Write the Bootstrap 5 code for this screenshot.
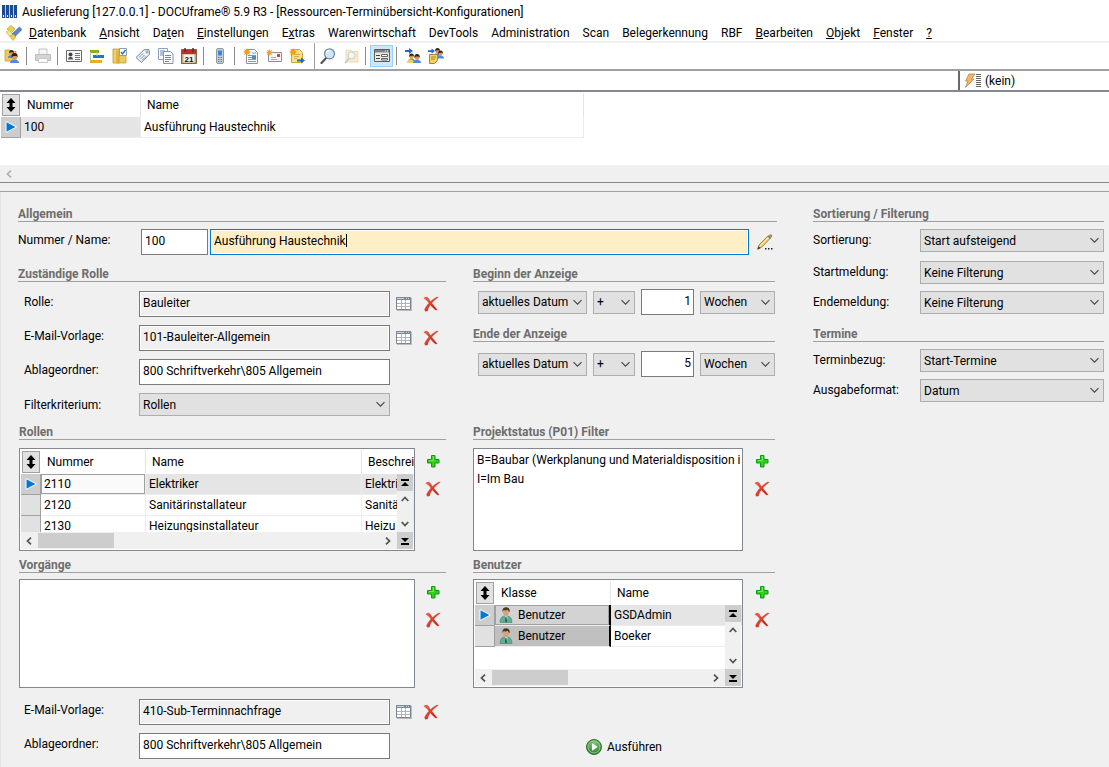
<!DOCTYPE html>
<html lang="de">
<head>
<meta charset="utf-8">
<meta name="viewport" content="width=device-width, initial-scale=1">
<title>DOCUframe – Ressourcen-Terminübersicht-Konfigurationen</title>
<link rel="stylesheet" href="https://cdn.jsdelivr.net/npm/bootstrap@5.3.0/dist/css/bootstrap.min.css">
<script src="https://cdn.jsdelivr.net/npm/bootstrap@5.3.0/dist/js/bootstrap.bundle.min.js"></script>
<style>
  body { font-family: Roboto, "Open Sans", sans-serif; font-size: 12px; line-height: 16px; color: #000; background: #f0f0f0; min-height: 100vh; }
  svg { display: block; flex: none; }
  a { color: inherit; text-decoration: none; }

  .title-row { height: 24px; padding: 0 2px; gap: 4px; }
  .menu-row { height: 17px; padding-left: 6px; gap: 13px; }
  .menu-row svg { margin-right: -6px; }
  .tool-row { height: 28px; border-top: 2px solid #f0f0f0; padding-left: 0; }
  .tool-btn { width: 23px; height: 22px; padding: 0; border: 1px solid transparent; background: none; display: flex; align-items: center; justify-content: center; }
  .tool-btn.pressed { background: #cce8ff; border-color: #99d1ff; }
  .tool-sep { width: 1px; height: 18px; margin: 0 4px 0 3px; background: #8d8d8d; }
  .tool-sep.tall { height: 26px; margin: 0 1px 0 6px; background: #a0a0a0; }
  .filter-row { height: 23px; border-top: 2px solid #a0a0a0; border-bottom: 2px solid #828790; }
  .filter-box { width: 151px; border-left: 2px solid #696969; padding-left: 4px; gap: 3px; }

  .overview { height: 73px; }
  .scroll-strip { height: 17px; background: #f0f0f0; padding-left: 5px; }
  .splitter { height: 10px; border-top: 1px solid #828790; border-bottom: 1px solid #a0a0a0; }

  .grid-table { border-collapse: separate; border-spacing: 0; table-layout: fixed; width: 0; margin: 0; }
  .grid-table th { font-weight: 400; height: 24px; padding: 0 0 0 6px; border-right: 1px solid #e5e5e5; white-space: nowrap; overflow: hidden; }
  .grid-table td { height: 21px; padding: 0 0 0 3px; border-right: 1px solid #ededed; border-bottom: 1px solid #ededed; white-space: nowrap; overflow: hidden; }
  .grid-table .handle { padding: 0; background: #e1e1e1; border-right: 1px solid #a0a0a0; border-bottom: 1px solid #a0a0a0; }
  .grid-table th:first-child { padding: 0 0 0 1px; }
  .grid-table tr.current .handle { background: #cdcdcd; }
  .grid-table tr.current td:not(.handle) { background: #e5e5e5; }
  .grid-table tr.current td.focus-cell { background: #fafafa; box-shadow: inset 0 0 0 1px #a0a0a0; }
  .grid-table tr.current td.unlit { background: #fff; }
  .grid-table td.klass-cell { background: #c0c0c0; border-right: 2px solid #000; }
  .grid-table tr.current td.klass-cell { background: #d3d3d3; box-shadow: inset 0 0 0 1px #a0a0a0; }
  .sort-btn { width: 18px; height: 22px; padding: 0; border: 1px solid #a0a0a0; background: #e1e1e1; display: flex; align-items: center; justify-content: center; }
  .handle svg { margin: auto; }

  .form-area { border-left: 1px solid #e3e3e3; padding: 14px 5px 8px 17px; display: grid; grid-template-columns: minmax(0, 759fr) minmax(0, 291fr); column-gap: 36px; }
  .form-split { display: grid; grid-template-columns: minmax(0, 428fr) minmax(0, 304fr); column-gap: 27px; }
  .col-mid { padding-right: 2px; }
  .sect { font-size: 12px; line-height: 13px; font-weight: 700; color: #6d6d6d; border-bottom: 1px solid #a0a0a0; margin: 0; padding-top: 2px; }
  .field-row { display: flex; align-items: center; height: 26px; }
  .field-row > label { flex: none; width: 121px; padding: 0 0 4px 6px; }
  .field-row.wide > label { width: 123px; padding-left: 0; }
  .field-row.low { height: 23px; }
  .field-row.low > label { padding-bottom: 0; }
  .field-row .picks { width: 56px; padding: 0 0 0 6px; gap: 11px; }
  .right-row { display: flex; align-items: center; height: 23px; }
  .right-row > label { flex: none; width: 107px; padding-bottom: 1px; }

  .form-control.box { height: 26px; border: 1px solid #7a7a7a; border-radius: 0; padding: 0 4px 3px 3px; font-size: 12px; line-height: 16px; color: #000; background: #fff; }
  .form-control.box[readonly] { background: #f0f0f0; box-shadow: inset 0 0 0 1px #fff; }
  .form-control.box.active-box { background: #ffefc6; border-color: #0078d7; box-shadow: inset 0 0 0 1px #fff; }
  .form-control.box.num { padding-right: 2px; }
  .form-control.box.nr-box { width: 67px; }
  .caret { position: absolute; left: 136px; top: 5px; width: 1px; height: 13px; background: #000; }
  .form-select.drop { height: 23px; border: 1px solid #adadad; border-radius: 0; padding: 0 17px 0 3px; font-size: 12px; line-height: 16px; color: #000; background-color: #e1e1e1; background-position: right 3px center; background-size: 11px 7px;
    --bs-form-select-bg-img: url("data:image/svg+xml,%3Csvg xmlns='http://www.w3.org/2000/svg' viewBox='0 0 11 7'%3E%3Cpath d='M1.5 1.2 5.5 5.2 9.5 1.2' fill='none' stroke='%23444' stroke-width='1.1'/%3E%3C/svg%3E"); background-image: var(--bs-form-select-bg-img); }
  .span-row { display: grid; grid-template-columns: 109fr 42fr 53fr 75fr; column-gap: 6px; align-items: center; padding-left: 5px; height: 26px; }

  .icon-btn { width: 16px; height: 16px; padding: 0; border: 0; background: none; display: block; }
  .list-box { position: relative; flex: 1 1 0; min-width: 0; overflow: hidden; background: #fff; border: 1px solid #828790; padding: 1px; }
  .list-box.h-a { height: 103px; }
  .list-box.h-b { height: 109px; }
  .side-btns { width: 32px; padding: 5px 0 0 11px; display: flex; flex-direction: column; gap: 12px; }
  .inset-start { margin-left: 1px; }
  .inset-start .side-btns { width: 31px; padding-left: 10px; }
  .plain-list { padding: 2px 0 0 3px; }
  .plain-item { height: 19px; line-height: 19px; white-space: nowrap; }
  .bar-v { position: absolute; right: 1px; top: 25px; bottom: 1px; width: 16px; background: #f0f0f0; display: flex; flex-direction: column; }
  .bar-v .end-btn { height: 17px; background: #cdcdcd; display: flex; align-items: center; justify-content: center; }
  .bar-h { position: absolute; left: 1px; right: 17px; bottom: 1px; height: 17px; background: #f0f0f0; display: flex; align-items: center; padding: 0 5px 0 4px; }
  .bar-h .thumb { width: 76px; height: 15px; margin-left: 5px; background: #cdcdcd; }
  .run-btn { border: 0; background: none; padding: 0; gap: 5px; }
</style>
</head>
<body>

<svg width="0" height="0" class="position-absolute" aria-hidden="true">
  <defs>
    <linearGradient id="gRed" x1="0" y1="0" x2="1" y2="1"><stop offset="0" stop-color="#f0674e"/><stop offset="1" stop-color="#b8140c"/></linearGradient>
    <radialGradient id="gPlay" cx=".5" cy=".3" r=".7"><stop offset="0" stop-color="#8fc97c"/><stop offset="1" stop-color="#1e7a2b"/></radialGradient>
    <symbol id="i-x" viewBox="0 0 16 16"><g fill="url(#gRed)" stroke="#d23a26" stroke-width=".3"><path d="M.8 2.200C2.300.8 4.400.7 5.400 2.200 6.400 4 7.500 5.400 8.700 7 10.400 9 12.200 11.400 14.200 13.800L12.500 14C10.600 12.500 8.700 10.500 7 8.500 5.500 6.500 4 3.800.8 2.200Z"/><path d="M15.300 1.300C11.800 3.700 9.600 6 8 8.300 6 10.700 5 12.500 4.600 15L2.300 15.300 1.500 13.700C2.400 11.400 4 9.200 6 7.100 8.300 4.600 11.200 2.300 13.800 1Z"/></g></symbol>
    <symbol id="i-plus" viewBox="0 0 16 16"><path d="M6.500 2.500h3.500v4h4v3.500h-4v4h-3.500v-4h-4v-3.500h4z" fill="#35d01c" stroke="#0c9a10"/><path d="M7.500 3.500h1v4h-4.500" fill="none" stroke="#8ff06a" stroke-width=".8"/></symbol>
    <symbol id="i-table" viewBox="0 0 16 16"><path d="M1 2h15v13H1z" fill="#b9bcc0"/><path d="M.5 1.500h14v12H.5z" fill="#fff" stroke="#7c858e"/><path d="M0 1h15v3H0z" fill="#7c8a98"/><path d="M10 2h1v1h-1zm2 0h1v1h-1zM1 2h7v1H1z" fill="#c5d3e2"/><path d="M1 7.500h13M1 10.500h13M5.500 4v9M9.500 4v9" stroke="#aeb4ba" fill="none"/></symbol>
    <symbol id="i-pencil" viewBox="0 0 16 16"><path d="M.6 15.200 2 11 11 1.800l2.500 2.300-9.200 9.400z" fill="#f2d06b" stroke="#8a6a34" stroke-width=".8"/><path d="M3.200 12 12 3" stroke="#fff1b0"/><path d="M.5 15.500 1.500 12.500l2 1.500z" fill="#403020"/><path d="m10.500 2.500 2.400 2.300 1.300-1.200-2.400-2.300z" fill="#5f8f7c"/><path d="m12 1.200 2.400 2.300C15.500 2.500 15.300 1.500 14.800.9 14 0 12.900.2 12 1.200z" fill="#e0605c"/><path d="M8 14h1.500v1.500H8zm3 0h1.500v1.500H11zm3 0h1.500v1.500H14z" fill="#222"/></symbol>
    <symbol id="i-sort" viewBox="0 0 10 14"><path d="M5 0 9.500 5H6.500v4h3L5 14 .5 9h3V5H.5z" fill="#000"/></symbol>
    <symbol id="i-cur" viewBox="0 0 12 12"><path d="M1 .5 11.500 6 1 11.500z" fill="#0078d7" stroke="#fff"/></symbol>
    <symbol id="i-left" viewBox="0 0 8 8"><path d="M6 .7 2.500 4 6 7.300" fill="none" stroke="#505050" stroke-width="1.700"/></symbol>
    <symbol id="i-right" viewBox="0 0 8 8"><path d="M2 .7 5.500 4 2 7.300" fill="none" stroke="#505050" stroke-width="1.700"/></symbol>
    <symbol id="i-up" viewBox="0 0 8 8"><path d="M.7 6 4 2.500 7.300 6" fill="none" stroke="#505050" stroke-width="1.700"/></symbol>
    <symbol id="i-down" viewBox="0 0 8 8"><path d="M.7 2 4 5.500 7.300 2" fill="none" stroke="#505050" stroke-width="1.700"/></symbol>
    <symbol id="i-top" viewBox="0 0 8 8"><path d="M0 0h8v2H0zM4 3l4 4H0z" fill="#000"/></symbol>
    <symbol id="i-bottom" viewBox="0 0 8 8"><path d="M0 6h8v2H0zM0 1h8L4 5z" fill="#000"/></symbol>
    <symbol id="i-user" viewBox="0 0 14 16"><path d="M1 15.500C1 11 3 9.500 5 9l4 0c2.500.5 4 2.500 4 6.500z" fill="#5fae92" stroke="#3e8a70" stroke-width=".6"/><path d="M5.500 8.500h3L8 13z" fill="#f4f4f4"/><path d="M6.500 9.500h1l.5 5-1 1-1-1z" fill="#2d5e50"/><ellipse cx="7" cy="5.300" rx="2.900" ry="3.700" fill="#d9a27a"/><path d="M3.500 5C3 1.500 5 .3 7 .3s4.300 1 3.600 5C9.500 4.500 9 3 8.500 2.800 7 4 5 3 4.300 3.500z" fill="#4a3526"/></symbol>
    <symbol id="i-play" viewBox="0 0 16 16"><circle cx="8" cy="8" r="7.500" fill="url(#gPlay)" stroke="#2c7030"/><circle cx="8" cy="8" r="6" fill="none" stroke="#a9d9a0" stroke-width=".8"/><path d="M6 4.300 11.500 8 6 11.700z" fill="#fff"/></symbol>
    <symbol id="i-head" viewBox="0 0 8 9"><path d="M0 9C0 6.500 2 6 4 6s4 .5 4 3z" fill="#4c8be8"/><circle cx="4" cy="3.800" r="2.300" fill="#d99a5c"/><path d="M1.400 4C1 1 2.500 0 4 0s3.300 1 2.700 4L5.800 2.600H3z" fill="#33201a"/></symbol>
    <symbol id="i-arrow" viewBox="0 0 8 6"><path d="M0 2h4V0l4 3-4 3V4H0z" fill="#2467cc"/></symbol>
    <symbol id="i-star" viewBox="0 0 8 8"><path d="m4 0 .9 2L7 1 6 3.100 8 4 6 4.900 7 7 4.900 6 4 8l-.9-2L1 7l1-2.100L0 4l2-.9L1 1l2.100 1z" fill="#f0a020"/></symbol>
  </defs>
</svg>

<header class="bg-white">
  <div class="title-row d-flex align-items-center">
    <svg width="16" height="14" viewBox="0 0 16 14"><path d="M0 0h3v13H0zm4 0h3v13H4zm4 0h3v13H8zm4 0h3v13h-3z" fill="#1b4b94"/><path d="M3 0h1v13H3zm4 0h1v13H7zm4 0h1v13h-1z" fill="#b9cfe8"/><path d="M1 10h1v2H1zm4 0h1v2H5zm4 0h1v2H9zm4 0h1v2h-1z" fill="#fff"/></svg>
    <span>Auslieferung [127.0.0.1] - DOCUframe® 5.9 R3 - [Ressourcen-Terminübersicht-Konfigurationen]</span>
  </div>
  <nav class="menu-row d-flex align-items-center text-nowrap" aria-label="Hauptmenü">
    <svg width="16" height="16" viewBox="0 0 16 16"><path d="m5 .5 4 3.500-4 4L1 4z" fill="#e9cf4c" stroke="#b59a2c" stroke-width=".6"/><path d="m0 7 3-2 4 4-3 3z" fill="#f1e49a" stroke="#b8a54c" stroke-width=".6"/><path d="m6 9 7.500-7 2.500 2.500L8.500 12z" fill="#5c86c8" stroke="#34589a" stroke-width=".6"/><path d="m4 11.500 3-2.500 3 3-3 3.500z" fill="#e9cf4c" stroke="#b59a2c" stroke-width=".6"/></svg>
    <a href="#"><u>D</u>atenbank</a><a href="#"><u>A</u>nsicht</a><a href="#">Da<u>t</u>en</a><a href="#"><u>E</u>instellungen</a><a href="#">E<u>x</u>tras</a><a href="#">Warenwirtschaft</a><a href="#">DevTools</a><a href="#">Administration</a><a href="#">Scan</a><a href="#">Belegerkennung</a><a href="#">RBF</a><a href="#"><u>B</u>earbeiten</a><a href="#"><u>O</u>bjekt</a><a href="#"><u>F</u>enster</a><a href="#"><u>?</u></a>
  </nav>
  <div class="tool-row d-flex align-items-center" role="toolbar" aria-label="Werkzeuge">
    <button class="tool-btn" aria-label="Adressen"><svg width="16" height="16" viewBox="0 0 16 16"><path d="M1 2h5l1 1.500h5V13H1z" fill="#f0c75c" stroke="#c39a35" stroke-width=".7"/><use href="#i-head" x="4" y="2" width="7" height="8"/><use href="#i-head" x="6" y="5" width="9" height="10"/></svg></button>
    <span class="tool-sep"></span>
    <button class="tool-btn" aria-label="Drucken"><svg width="16" height="16" viewBox="0 0 16 16"><path d="M4 1h8v6H4z" fill="#f5f5f5" stroke="#c4c4c4"/><path d="M.5 6.500h15v6H.5z" fill="#d4d4d4" stroke="#bcbcbc"/><path d="M3.500 10.500h9v4h-9z" fill="#fafafa" stroke="#c8c8c8"/></svg></button>
    <span class="tool-sep"></span>
    <button class="tool-btn" aria-label="Visitenkarte"><svg width="16" height="16" viewBox="0 0 16 16"><path d="M.5 2.500h15v11H.5z" fill="#f7f7f7" stroke="#6b6b6b"/><path d="M2 11.500c0-2 1-2.500 2.500-2.500S7 9.500 7 11.500z" fill="#555"/><circle cx="4.500" cy="6.500" r="2" fill="#444"/><path d="M9 5.500h5M9 7.500h5M9 9.500h5M9 11.500h5" stroke="#777"/></svg></button>
    <button class="tool-btn" aria-label="Zeitplan"><svg width="16" height="16" viewBox="0 0 16 16"><path d="M1 2h9v3H1z" fill="#7fb21c"/><path d="M4 7h11v3H4z" fill="#1f78c4"/><path d="M1 12h12v3H1z" fill="#e8b01e"/><path d="M1.500 4v9M8 4v4" stroke="#bbb" fill="none"/></svg></button>
    <button class="tool-btn" aria-label="Vorgang"><svg width="16" height="16" viewBox="0 0 16 16"><path d="M1 1h6v14H1z" fill="#f1cf6a" stroke="#bd9636" stroke-width=".8"/><path d="M4 2l3 1v13l-3-1z" fill="#e0b546"/><path d="M7 7h7v8H7z" fill="#ecc860" stroke="#bd9636" stroke-width=".7"/><path d="M7.500.5h7v7h-7z" fill="#fff" stroke="#8ea0b4"/><path d="m9 4 1.500 2L13.500 2" fill="none" stroke="#2d6cb8" stroke-width="1.300"/></svg></button>
    <button class="tool-btn" aria-label="Etikett"><svg width="16" height="16" viewBox="0 0 16 16"><path d="M1 9.500 9 1.800l5-.3.500 4.700L6.500 14.500z" fill="#eef2f6" stroke="#7c8894"/><circle cx="12" cy="4" r="1.100" fill="#fff" stroke="#66727e" stroke-width=".7"/><path d="m4 9.500 4-4M5.500 11l4-4M7 12.300l4-4" stroke="#8798a8" fill="none"/></svg></button>
    <button class="tool-btn" aria-label="Dokumente"><svg width="16" height="16" viewBox="0 0 16 16"><path d="M.5.500h9v11h-9z" fill="#fff" stroke="#8ba0bc"/><path d="M2 3h5M2 5h4M2 7h4" stroke="#5b86c4"/><path d="M5.500 3.500h7l2.500 2.500v9.500H5.500z" fill="#fff" stroke="#7a93b4"/><path d="M7 7.500h6M7 9.500h6M7 11.500h6M7 13.500h4" stroke="#5f87c0"/></svg></button>
    <button class="tool-btn" aria-label="Kalender"><svg width="16" height="16" viewBox="0 0 16 16"><path d="M.5 1.500h15v14H.5z" fill="#b9a88c" stroke="#7b6549"/><path d="M1 2h14v4H1z" fill="#c22c2c"/><path d="M4 0v4M12 0v4" stroke="#4b3524" stroke-width="1.500"/><path d="M2.500 6.500h11v8h-11z" fill="#f6f0e4"/><text x="8" y="13.500" text-anchor="middle" font-family="Liberation Sans, sans-serif" font-size="8" font-weight="700" fill="#111">21</text></svg></button>
    <span class="tool-sep"></span>
    <button class="tool-btn" aria-label="Telefon"><svg width="16" height="16" viewBox="0 0 16 16"><rect x="4.500" y=".5" width="7" height="15" rx="1.500" fill="#c7d0d8" stroke="#8d99a5"/><path d="M6 2.500h4v5H6z" fill="#3c86d8"/><path d="M6 9.500h4M6 11.500h4M6 13.500h4" stroke="#6f7c88" stroke-dasharray="1 .5"/></svg></button>
    <span class="tool-sep"></span>
    <button class="tool-btn" aria-label="Neues Dokument"><svg width="16" height="16" viewBox="0 0 16 16"><path d="M3.500 1.500h8l3 3v11h-11z" fill="#fff" stroke="#8494a8"/><path d="M9 5h4M5 7.500h8M5 9.500h4M5 11.500h8M5 13.500h8" stroke="#7b98c0"/><path d="M9 8h4v3H9z" fill="#4a8ad0"/><use href="#i-star" x="0" y="0" width="8" height="8"/></svg></button>
    <button class="tool-btn" aria-label="Neue E-Mail"><svg width="16" height="16" viewBox="0 0 16 16"><path d="M2.500 4.500h13v9h-13z" fill="#f4f4f4" stroke="#909090"/><path d="M11 6h3v3h-3z" fill="#d04848"/><path d="M5 9.500h5M5 11.500h6" stroke="#aaa"/><use href="#i-star" x="0" y="1" width="7" height="7"/></svg></button>
    <button class="tool-btn" aria-label="Neue Notiz"><svg width="16" height="16" viewBox="0 0 16 16"><path d="M2.500 1.500h8l3 3v10h-11z" fill="#f8e08c" stroke="#cda63a"/><path d="M5 6.500h6M5 8.500h5M5 10.500h3" stroke="#d4b04c"/><use href="#i-star" x="0" y="0" width="8" height="8"/><use href="#i-arrow" x="8" y="9" width="8" height="7"/></svg></button>
    <span class="tool-sep tall"></span>
    <button class="tool-btn" aria-label="Suchen"><svg width="16" height="16" viewBox="0 0 16 16"><path d="M6.500 9.500 1.500 15" stroke="#555" stroke-width="2.200" stroke-linecap="round"/><circle cx="9.500" cy="5.800" r="5" fill="#cfe6fa" stroke="#7189a4" stroke-width="1.200"/><path d="M6.500 5a3 3 0 0 1 3-2.500" stroke="#fff" fill="none" stroke-width="1.300"/></svg></button>
    <button class="tool-btn" aria-label="Suche in Ordner"><svg width="16" height="16" viewBox="0 0 16 16" opacity=".7"><path d="M3 2h5l1 1.500h6V14H3z" fill="#f3e3b4" stroke="#e3cf95"/><path d="M6 10.500 2 15" stroke="#aaa" stroke-width="1.500"/><circle cx="8.500" cy="7.500" r="3.500" fill="#eef4fa" stroke="#b0b8c0"/></svg></button>
    <span class="tool-sep"></span>
    <button class="tool-btn pressed" aria-label="Formularansicht" aria-pressed="true"><svg width="16" height="16" viewBox="0 0 16 16"><path d="M.5 1.500h15v12H.5z" fill="#ecebe4" stroke="#5c5c5c"/><path d="M1 2h14v2.500H1z" fill="#7d8389"/><path d="M11 3h1m1 0h1" stroke="#fff"/><path d="M2 7.500h4M2 10.500h4" stroke="#444"/><path d="M7.500 6.500h6v2h-6zm0 4h6v1.500h-6z" fill="#fff" stroke="#555" stroke-width=".9"/></svg></button>
    <span class="tool-sep"></span>
    <button class="tool-btn" aria-label="Benutzer zuweisen"><svg width="16" height="16" viewBox="0 0 16 16"><use href="#i-arrow" x="0" y="0" width="8" height="6"/><use href="#i-head" x="3" y="5" width="7" height="9"/><path d="M2 15c0-3 1.500-3.500 3.500-3.500S9 12 9 15z" fill="#f0cf62"/><use href="#i-head" x="8" y="6" width="8" height="9"/></svg></button>
    <button class="tool-btn" aria-label="Rolle zuweisen"><svg width="16" height="16" viewBox="0 0 16 16"><use href="#i-head" x="6" y="0" width="7" height="8"/><use href="#i-head" x="9" y="2" width="7" height="9"/><path d="M1.500 6.500h8v6l-3 3h-5z" fill="#f3d166" stroke="#a98732"/><path d="M3 9h5M3 11h4" stroke="#a98732"/><use href="#i-arrow" x="0" y="0" width="7" height="6"/></svg></button>
  </div>
  <div class="filter-row d-flex justify-content-end">
    <div class="filter-box d-flex align-items-center">
      <svg width="18" height="16" viewBox="0 0 18 16"><path d="M5 1h6L7.500 6H10L1.500 14.500 4 8H1.500z" fill="#f5b565" stroke="#b98545" stroke-width=".8"/><path d="M12 1.500h5M12 3.500h5M12 5.500h5M12 7.500h5M12 9.500h5M12 11.500h5M12 13.500h5" stroke="#666"/></svg>
      <span>(kein)</span>
    </div>
  </div>
</header>

<section class="bg-white" aria-label="Konfigurationen">
  <div class="overview" style="padding:1px 0 0 1px">
    <table class="grid-table">
      <colgroup><col style="width:20px"><col style="width:120px"><col style="width:443px"></colgroup>
      <thead><tr><th class="border-0"><button class="sort-btn" aria-label="Sortieren"><svg width="10" height="14"><use href="#i-sort"/></svg></button></th><th>Nummer</th><th>Name</th></tr></thead>
      <tbody><tr class="current"><td class="handle"><svg width="12" height="12"><use href="#i-cur"/></svg></td><td>100</td><td class="unlit">Ausführung Haustechnik</td></tr></tbody>
    </table>
  </div>
  <div class="scroll-strip d-flex align-items-center"><svg width="8" height="8" opacity=".4"><use href="#i-left"/></svg></div>
</section>
<div class="splitter"></div>

<main class="form-area">
  <div>
    <h2 class="sect">Allgemein</h2>
    <div class="field-row wide" style="margin-top:7px">
      <label for="nr">Nummer / Name:</label>
      <input id="nr" class="form-control box nr-box flex-shrink-0" value="100">
      <div class="position-relative flex-grow-1" style="margin-left:2px">
        <input aria-label="Name" class="form-control box active-box" value="Ausführung Haustechnik">
        <span class="caret"></span>
      </div>
      <button class="icon-btn mx-1 ms-2" aria-label="Bearbeiten"><svg width="16" height="16"><use href="#i-pencil"/></svg></button>
    </div>

    <div class="form-split" style="margin-top:11px">
      <div>
        <h2 class="sect">Zuständige Rolle</h2>
        <div class="d-flex flex-column gap-2" style="padding-top:9px">
          <div class="field-row"><label for="rolle">Rolle:</label><input id="rolle" class="form-control box" readonly value="Bauleiter"><div class="picks d-flex flex-shrink-0"><button class="icon-btn" aria-label="Rolle wählen"><svg width="16" height="16"><use href="#i-table"/></svg></button><button class="icon-btn" aria-label="Rolle entfernen"><svg width="16" height="16"><use href="#i-x"/></svg></button></div></div>
          <div class="field-row"><label for="mail1">E-Mail-Vorlage:</label><input id="mail1" class="form-control box" readonly value="101-Bauleiter-Allgemein"><div class="picks d-flex flex-shrink-0"><button class="icon-btn" aria-label="Vorlage wählen"><svg width="16" height="16"><use href="#i-table"/></svg></button><button class="icon-btn" aria-label="Vorlage entfernen"><svg width="16" height="16"><use href="#i-x"/></svg></button></div></div>
          <div class="field-row"><label for="abl1">Ablageordner:</label><input id="abl1" class="form-control box" value="800 Schriftverkehr\805 Allgemein"><div class="picks flex-shrink-0"></div></div>
          <div class="field-row low"><label for="filt">Filterkriterium:</label><select id="filt" class="form-select drop"><option>Rollen</option></select><div class="picks flex-shrink-0"></div></div>
        </div>
      </div>
      <div class="col-mid">
        <h2 class="sect">Beginn der Anzeige</h2>
        <div class="span-row" style="margin-top:7px">
          <select class="form-select drop" aria-label="Beginn Bezug"><option>aktuelles Datum</option></select>
          <select class="form-select drop" aria-label="Beginn Vorzeichen"><option>+</option></select>
          <input class="form-control box num text-end" aria-label="Beginn Anzahl" value="1">
          <select class="form-select drop" aria-label="Beginn Einheit"><option>Wochen</option></select>
        </div>
        <h2 class="sect" style="margin-top:11px">Ende der Anzeige</h2>
        <div class="span-row" style="margin-top:9px">
          <select class="form-select drop" aria-label="Ende Bezug"><option>aktuelles Datum</option></select>
          <select class="form-select drop" aria-label="Ende Vorzeichen"><option>+</option></select>
          <input class="form-control box num text-end" aria-label="Ende Anzahl" value="5">
          <select class="form-select drop" aria-label="Ende Einheit"><option>Wochen</option></select>
        </div>
      </div>
    </div>

    <div class="form-split mt-2">
      <div class="inset-start">
        <h2 class="sect">Rollen</h2>
        <div class="d-flex mt-2">
          <div class="list-box h-a">
            <table class="grid-table">
              <colgroup><col style="width:20px"><col style="width:105px"><col style="width:216px"><col style="width:52px"></colgroup>
              <thead><tr><th class="border-0"><button class="sort-btn" aria-label="Sortieren"><svg width="10" height="14"><use href="#i-sort"/></svg></button></th><th>Nummer</th><th>Name</th><th class="border-0">Beschrei</th></tr></thead>
              <tbody>
                <tr class="current"><td class="handle"><svg width="12" height="12"><use href="#i-cur"/></svg></td><td class="focus-cell">2110</td><td>Elektriker</td><td>Elektri</td></tr>
                <tr><td class="handle"></td><td>2120</td><td>Sanitärinstallateur</td><td>Sanitä</td></tr>
                <tr><td class="handle"></td><td>2130</td><td>Heizungsinstallateur</td><td>Heizu</td></tr>
              </tbody>
            </table>
            <div class="bar-h"><svg width="8" height="8"><use href="#i-left"/></svg><span class="thumb"></span><svg width="8" height="8" class="ms-auto"><use href="#i-right"/></svg></div>
            <div class="bar-v"><span class="end-btn"><svg width="8" height="8"><use href="#i-top"/></svg></span><span class="flex-grow-1 d-flex flex-column align-items-center justify-content-between py-1"><svg width="8" height="8"><use href="#i-up"/></svg><svg width="8" height="8"><use href="#i-down"/></svg></span><span class="end-btn"><svg width="8" height="8"><use href="#i-bottom"/></svg></span></div>
          </div>
          <div class="side-btns"><button class="icon-btn" aria-label="Rolle hinzufügen"><svg width="16" height="16"><use href="#i-plus"/></svg></button><button class="icon-btn" aria-label="Rolle löschen"><svg width="16" height="16"><use href="#i-x"/></svg></button></div>
        </div>
      </div>
      <div class="col-mid">
        <h2 class="sect">Projektstatus (P01) Filter</h2>
        <div class="d-flex mt-2">
          <div class="list-box h-a plain-list">
            <div class="plain-item">B=Baubar (Werkplanung und Materialdisposition i</div>
            <div class="plain-item">I=Im Bau</div>
          </div>
          <div class="side-btns"><button class="icon-btn" aria-label="Status hinzufügen"><svg width="16" height="16"><use href="#i-plus"/></svg></button><button class="icon-btn" aria-label="Status löschen"><svg width="16" height="16"><use href="#i-x"/></svg></button></div>
        </div>
      </div>
    </div>

    <div class="form-split" style="margin-top:6px">
      <div>
        <div class="inset-start">
          <h2 class="sect">Vorgänge</h2>
          <div class="d-flex" style="margin-top:6px">
            <div class="list-box h-b"></div>
            <div class="side-btns"><button class="icon-btn" aria-label="Vorgang hinzufügen"><svg width="16" height="16"><use href="#i-plus"/></svg></button><button class="icon-btn" aria-label="Vorgang löschen"><svg width="16" height="16"><use href="#i-x"/></svg></button></div>
          </div>
        </div>
        <div class="d-flex flex-column gap-2" style="padding-top:11px">
          <div class="field-row"><label for="mail2">E-Mail-Vorlage:</label><input id="mail2" class="form-control box" readonly value="410-Sub-Terminnachfrage"><div class="picks d-flex flex-shrink-0"><button class="icon-btn" aria-label="Vorlage wählen"><svg width="16" height="16"><use href="#i-table"/></svg></button><button class="icon-btn" aria-label="Vorlage entfernen"><svg width="16" height="16"><use href="#i-x"/></svg></button></div></div>
          <div class="field-row"><label for="abl2">Ablageordner:</label><input id="abl2" class="form-control box" value="800 Schriftverkehr\805 Allgemein"><div class="picks flex-shrink-0"></div></div>
        </div>
      </div>
      <div class="col-mid d-flex flex-column">
        <h2 class="sect">Benutzer</h2>
        <div class="d-flex" style="margin-top:6px">
          <div class="list-box h-b">
            <table class="grid-table">
              <colgroup><col style="width:20px"><col style="width:116px"><col style="width:132px"></colgroup>
              <thead><tr><th class="border-0"><button class="sort-btn" aria-label="Sortieren"><svg width="10" height="14"><use href="#i-sort"/></svg></button></th><th>Klasse</th><th class="border-0">Name</th></tr></thead>
              <tbody>
                <tr class="current"><td class="handle"><svg width="12" height="12"><use href="#i-cur"/></svg></td><td class="klass-cell"><div class="d-flex align-items-center gap-1"><svg width="16" height="16"><use href="#i-user"/></svg>Benutzer</div></td><td>GSDAdmin</td></tr>
                <tr><td class="handle"></td><td class="klass-cell"><div class="d-flex align-items-center gap-1"><svg width="16" height="16"><use href="#i-user"/></svg>Benutzer</div></td><td>Boeker</td></tr>
              </tbody>
            </table>
            <div class="bar-h"><svg width="8" height="8"><use href="#i-left"/></svg><span class="thumb"></span><svg width="8" height="8" class="ms-auto"><use href="#i-right"/></svg></div>
            <div class="bar-v"><span class="end-btn"><svg width="8" height="8"><use href="#i-top"/></svg></span><span class="flex-grow-1 d-flex flex-column align-items-center justify-content-between py-1"><svg width="8" height="8"><use href="#i-up"/></svg><svg width="8" height="8"><use href="#i-down"/></svg></span><span class="end-btn"><svg width="8" height="8"><use href="#i-bottom"/></svg></span></div>
          </div>
          <div class="side-btns"><button class="icon-btn" aria-label="Benutzer hinzufügen"><svg width="16" height="16"><use href="#i-plus"/></svg></button><button class="icon-btn" aria-label="Benutzer löschen"><svg width="16" height="16"><use href="#i-x"/></svg></button></div>
        </div>
        <div class="flex-grow-1 d-flex align-items-end justify-content-center pb-1"><button class="run-btn d-flex align-items-center"><svg width="16" height="16"><use href="#i-play"/></svg>Ausführen</button></div>
      </div>
    </div>
  </div>

  <div>
    <h2 class="sect">Sortierung / Filterung</h2>
    <div class="right-row" style="margin-top:7px"><label for="s1">Sortierung:</label><select id="s1" class="form-select drop"><option>Start aufsteigend</option></select></div>
    <div class="right-row" style="margin-top:9px"><label for="s2">Startmeldung:</label><select id="s2" class="form-select drop"><option>Keine Filterung</option></select></div>
    <div class="right-row" style="margin-top:7px"><label for="s3">Endemeldung:</label><select id="s3" class="form-select drop"><option>Keine Filterung</option></select></div>
    <h2 class="sect" style="margin-top:12px">Termine</h2>
    <div class="right-row" style="margin-top:7px"><label for="s4">Terminbezug:</label><select id="s4" class="form-select drop"><option>Start-Termine</option></select></div>
    <div class="right-row" style="margin-top:7px"><label for="s5">Ausgabeformat:</label><select id="s5" class="form-select drop"><option>Datum</option></select></div>
  </div>
</main>
</body>
</html>
